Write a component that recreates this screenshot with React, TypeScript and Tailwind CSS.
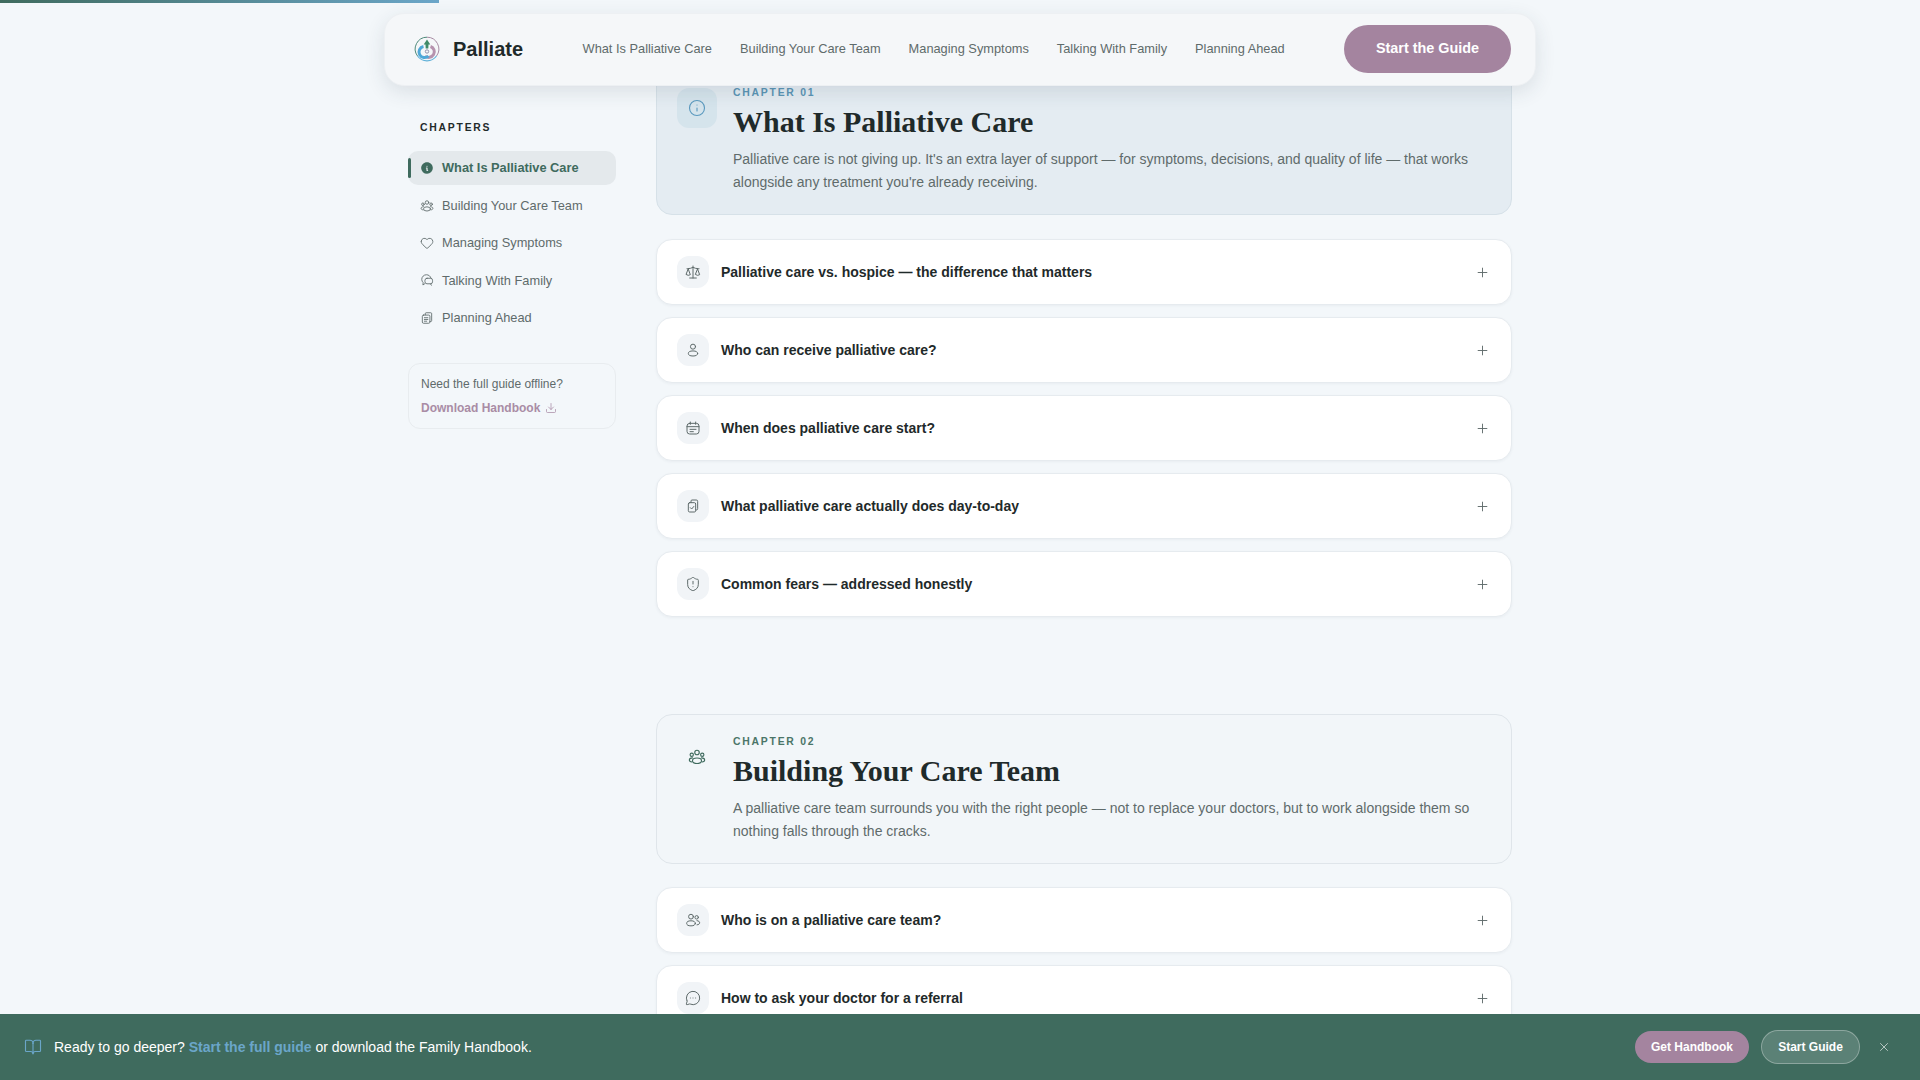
import React from "react";
import { Info, Heart, Scale, ShieldAlert, MessageCircleMore, BookOpen, Plus, X, Download } from "lucide-react";
import { TbInfoCircleFilled } from "react-icons/tb";

const sans = { fontFamily: '"Liberation Sans", Arial, sans-serif' };

type IconProps = { size?: number; className?: string };

function Svg({ size = 16, className, children }: IconProps & { children: React.ReactNode }) {
  return (
    <svg viewBox="0 0 24 24" width={size} height={size} className={className} fill="none" stroke="currentColor" strokeWidth={1.5} strokeLinecap="round" strokeLinejoin="round">
      {children}
    </svg>
  );
}

const UsersThree = (p: IconProps) => (
  <Svg {...p}>
    <circle cx="12" cy="6" r="3" />
    <circle cx="5" cy="9" r="2.2" />
    <circle cx="19" cy="9" r="2.2" />
    <ellipse cx="12" cy="17" rx="6" ry="3.6" />
    <path d="M6 13.2C3.5 13.4 1.8 14.5 1.8 16s1.4 2.4 3.5 2.7M18 13.2c2.5.2 4.2 1.3 4.2 2.8s-1.4 2.4-3.5 2.7" />
  </Svg>
);
const Chats = (p: IconProps) => (
  <Svg {...p}>
    <path d="M8 18.5 5 20.5l.4-4A8 8 0 0 1 3 11a8 8 0 0 1 8-8c3.8 0 7 2.4 7.8 5.8" />
    <rect x="8.5" y="9" width="13" height="9.5" rx="3.5" />
    <path d="M18 18.5l1.5 2.5" />
  </Svg>
);
const Docs = (p: IconProps) => (
  <Svg {...p}>
    <path d="M9 6.5V4.5A1.5 1.5 0 0 1 10.5 3h8A1.5 1.5 0 0 1 20 4.5v12a1.5 1.5 0 0 1-1.5 1.5H17" />
    <rect x="4" y="7" width="13" height="14" rx="2" />
    <path d="M7.5 11.5h6M7.5 14.5h6M7.5 17.5h4" />
  </Svg>
);
const PersonRound = (p: IconProps) => (
  <Svg {...p}>
    <circle cx="12" cy="7" r="3.8" />
    <ellipse cx="12" cy="17.2" rx="7" ry="3.8" />
  </Svg>
);
const Cal = (p: IconProps) => (
  <Svg {...p}>
    <rect x="3" y="5" width="18" height="16" rx="4" />
    <path d="M8 3v3.5M16 3v3.5M3 10h18M7.5 14h9M7.5 17.5h5" />
  </Svg>
);
const CopyCheck = (p: IconProps) => (
  <Svg {...p}>
    <path d="M9 7V4.5A1.5 1.5 0 0 1 10.5 3H17a2 2 0 0 1 2 2v11a2 2 0 0 1-2 2h-1" />
    <rect x="5" y="7" width="11" height="14" rx="2" />
    <path d="M8 14.5l2 2 3.2-3.8" />
  </Svg>
);
const UsersTwo = (p: IconProps) => (
  <Svg {...p}>
    <circle cx="9" cy="7" r="3.6" />
    <ellipse cx="9" cy="17" rx="6.5" ry="3.8" />
    <circle cx="17.5" cy="8" r="2.6" />
    <path d="M18 13c2.5.2 4 1.5 4 3.2s-1.5 2.8-4 3.1" />
  </Svg>
);

function Logo() {
  return (
    <svg viewBox="0 0 26 26" className="w-[26px] h-[26px] shrink-0" fill="none">
      <path d="M3.5 20A11.8 11.8 0 0 1 13 1.2" stroke="#4f8a7a" strokeWidth="1" />
      <path d="M13 1.2A11.8 11.8 0 0 1 22.5 20" stroke="#a88ca4" strokeWidth="1" />
      <path d="M3.5 20a11.8 11.8 0 0 0 19 0" stroke="#5fb0d8" strokeWidth="1.2" />
      <path d="M16.500 10.500a5.600 5.600 0 1 1-5.500 9.500" stroke="#b692ae" strokeWidth="3" />
      <path d="M9.500 10.500a5.600 5.600 0 1 0 5 9.500" stroke="#4fa8d8" strokeWidth="3" />
      <path d="M13 3.500 16.300 8.500l-1.800.1-.2 3.900h-2.600l-.2-3.900-1.800-.1z" fill="#3f8a68" />
      <circle cx="13" cy="15.500" r="1.700" fill="#f5f7f9" stroke="#6f6a90" strokeWidth="0.700" />
    </svg>
  );
}

const side = [
  { t: "Building Your Care Team", I: UsersThree },
  { t: "Managing Symptoms", I: Heart },
  { t: "Talking With Family", I: Chats },
  { t: "Planning Ahead", I: Docs },
];

const ScaleIcon = (p: IconProps) => <Scale size={p.size} className={p.className} strokeWidth={1.5} />;
const ShieldIcon = (p: IconProps) => <ShieldAlert size={p.size} className={p.className} strokeWidth={1.5} />;
const MoreIcon = (p: IconProps) => <MessageCircleMore size={p.size} className={p.className} strokeWidth={1.5} />;
const InfoIcon = (p: IconProps) => <Info size={p.size} className={p.className} strokeWidth={1.5} />;

function Faq({ t, I }: { t: string; I: React.ComponentType<IconProps> }) {
  return (
    <div className="h-[66px] shrink-0 rounded-[16px] bg-white border border-[#e6ebef] shadow-[0_1px_3px_rgba(40,60,70,0.05)] flex items-center pl-5 pr-[21px]">
      <span className="w-8 h-8 rounded-[12px] bg-[#f1f4f7] flex items-center justify-center text-[#5f6b6b]">
        <I size={16} />
      </span>
      <span className="ml-3 text-[14px] font-bold text-[#1f2a2a]">{t}</span>
      <Plus size={15} strokeWidth={1.5} className="ml-auto text-[#5f6b6b]" />
    </div>
  );
}

function Chapter({ n, title, desc, active, I }: { n: string; title: string; desc: string; active?: boolean; I: React.ComponentType<IconProps> }) {
  return (
    <div className={`rounded-[16px] border px-5 pt-5 pb-5 flex gap-4 ${active ? "bg-[#e4ecf2] border-[#d6e1e8]" : "bg-[#f2f6f9] border-[#dfe5ea]"}`}>
      <span className={`w-10 h-10 mt-[2px] shrink-0 rounded-[12px] flex items-center justify-center ${active ? "bg-[#d5e4ec] text-[#5b9abf]" : "text-[#3f6b5e]"}`}>
        <I size={18} />
      </span>
      <div className="flex-1">
        <div className={`text-[10.4px] leading-[13px] font-bold tracking-[0.17em] ${active ? "text-[#5b95b5]" : "text-[#4b7568]"}`}>{n}</div>
        <h2 className="mt-[3px] mb-[7px] text-[30px] leading-[39px] font-bold text-[#1f2a2a]" style={{ fontFamily: '"Liberation Serif", "Times New Roman", serif' }}>{title}</h2>
        <p className="text-[14px] leading-[23px] text-[#5f6b6b]">{desc}</p>
      </div>
    </div>
  );
}

export default function App() {
  return (
    <div className="relative h-screen overflow-hidden bg-[#f3f7fa]" style={sans}>
      <div className="absolute top-0 left-0 z-30 h-[3px] w-[439px] bg-gradient-to-r from-[#3f6b5e] to-[#6ba6c9]" />

      <nav className="absolute z-20 top-[12.5px] left-1/2 -translate-x-1/2 w-[1152px] h-[73px] rounded-[20px] bg-[#f5f7f9] border border-[#edf0f3] shadow-[0_6px_20px_rgba(40,60,70,0.12)] flex items-center pl-[29px] pr-6">
        <Logo />
        <span className="ml-[13px] text-[20px] font-bold text-[#1f2a2a]">Palliate</span>
        <div className="ml-[59.5px] flex items-center gap-7 text-[12.8px] text-[#5f6b6b]">
          <span>What Is Palliative Care</span>
          <span>Building Your Care Team</span>
          <span>Managing Symptoms</span>
          <span>Talking With Family</span>
          <span>Planning Ahead</span>
        </div>
        <span className="ml-auto h-12 w-[167px] rounded-full bg-[#a4849f] text-white text-[14.4px] font-bold flex items-center justify-center">Start the Guide</span>
      </nav>

      <div className="mx-auto max-w-[1152px] px-6 flex gap-10">
        <aside className="w-52 shrink-0 pt-[121px]">
          <div className="pl-3 text-[10.4px] leading-[14px] font-bold tracking-[0.17em] text-[#1f2a2a]">CHAPTERS</div>
          <div className="mt-4 flex flex-col gap-1">
            <div className="relative h-[34px] rounded-[10px] bg-[#e4e9ec] flex items-center gap-2 pl-3 text-[12.8px] font-bold text-[#3f6b5e]">
              <span className="absolute left-0 top-[7px] h-5 w-[3px] rounded-full bg-[#3f6b5e]" />
              <TbInfoCircleFilled size={14} />
              <span>What Is Palliative Care</span>
            </div>
            {side.map(({ t, I }) => (
              <div key={t} className="h-[33.3px] flex items-center gap-2 pl-3 text-[12.8px] text-[#5f6b6b]">
                <I size={14} strokeWidth={1.5} />
                <span>{t}</span>
              </div>
            ))}
          </div>
          <div className="mt-[29px] h-[66px] rounded-[12px] border border-[#e8ecef] pl-3 pt-[12px]">
            <div className="text-[12px] leading-[16px] text-[#5f6b6b]">Need the full guide offline?</div>
            <div className="mt-2 flex items-center gap-1 text-[12px] leading-[16px] font-bold text-[#a98ca5]">
              <span>Download Handbook</span>
              <Download size={12} strokeWidth={1.5} className="ml-[1px]" />
            </div>
          </div>
        </aside>

        <main className="flex-1 pt-[65px]">
          <Chapter n="CHAPTER 01" title="What Is Palliative Care" active I={InfoIcon}
            desc="Palliative care is not giving up. It's an extra layer of support — for symptoms, decisions, and quality of life — that works alongside any treatment you're already receiving." />
          <div className="mt-6 flex flex-col gap-3">
            <Faq t="Palliative care vs. hospice — the difference that matters" I={ScaleIcon} />
            <Faq t="Who can receive palliative care?" I={PersonRound} />
            <Faq t="When does palliative care start?" I={Cal} />
            <Faq t="What palliative care actually does day-to-day" I={CopyCheck} />
            <Faq t="Common fears — addressed honestly" I={ShieldIcon} />
          </div>
          <div className="mt-[96.5px]">
            <Chapter n="CHAPTER 02" title="Building Your Care Team" I={UsersThree}
              desc="A palliative care team surrounds you with the right people — not to replace your doctors, but to work alongside them so nothing falls through the cracks." />
          </div>
          <div className="mt-[23.9px] flex flex-col gap-3">
            <Faq t="Who is on a palliative care team?" I={UsersTwo} />
            <Faq t="How to ask your doctor for a referral" I={MoreIcon} />
          </div>
        </main>
      </div>

      <div className="absolute z-20 bottom-0 inset-x-0 h-[66px] bg-[#3f6b5e] flex items-center pl-6 pr-[29px] text-white">
        <BookOpen size={18} strokeWidth={1.5} className="text-[#6ba6c9]" />
        <span className="ml-3 text-[14px]">Ready to go deeper? <b className="text-[#6ba6c9]">Start the full guide</b> or download the Family Handbook.</span>
        <span className="ml-auto h-8 w-[114px] rounded-full bg-[#a4849f] text-[12px] font-bold flex items-center justify-center">Get Handbook</span>
        <span className="ml-3 h-[34px] w-[99px] rounded-full bg-white/15 border border-white/30 text-[12px] font-bold flex items-center justify-center">Start Guide</span>
        <X size={14} strokeWidth={1.5} className="ml-[17px] text-white/70" />
      </div>
    </div>
  );
}
